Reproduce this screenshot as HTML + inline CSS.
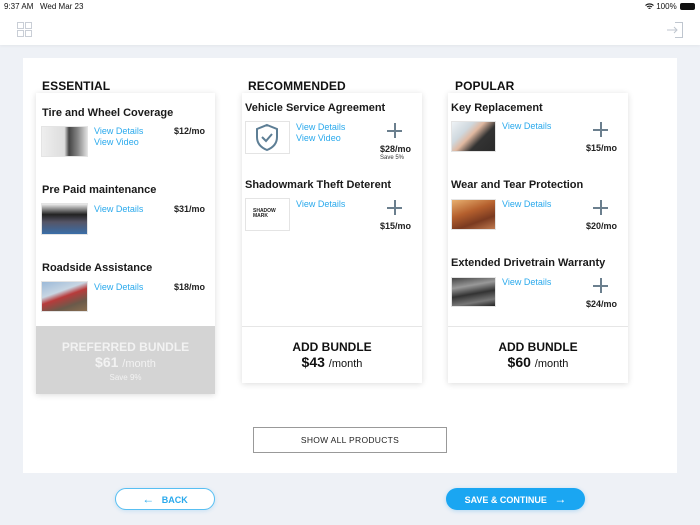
<!DOCTYPE html>
<html><head><meta charset="utf-8">
<style>
*{margin:0;padding:0;box-sizing:border-box}
body{width:700px;height:525px;overflow:hidden;background:#eef1f6;font-family:"Liberation Sans",sans-serif;position:relative;color:#111}
.a{position:absolute;white-space:nowrap}
.hdr{position:absolute;left:0;top:0;width:700px;height:45px;background:#fff;box-shadow:0 1px 3px rgba(0,0,0,.05)}
.panel{position:absolute;left:23px;top:58px;width:654px;height:415px;background:#fff}
.card{position:absolute;background:#fff;box-shadow:0 1px 6px rgba(0,0,0,.14)}
.h{font-size:12px;font-weight:bold;letter-spacing:.1px;color:#111}
.t{font-size:11px;font-weight:bold;color:#1a1a1a}
.l{font-size:9px;color:#2aa9ec;line-height:11px}
.p{font-size:9px;font-weight:bold;color:#222}
.img{position:absolute;border:1px solid #e4e4e4}
.plus{position:absolute;width:15px;height:15px}
.plus:before{content:"";position:absolute;left:0;top:6.5px;width:15px;height:2px;background:#6b7f8e}
.plus:after{content:"";position:absolute;left:6.5px;top:0;width:2px;height:15px;background:#6b7f8e}
.bt{font-size:12px;font-weight:bold}
.bp{font-size:14px;font-weight:bold}
.bp span{font-weight:normal;font-size:11px}
</style></head><body>
<div class="hdr"></div>
<div class="a" style="left:4px;top:2px;font-size:8px;color:#111">9:37 AM&nbsp;&nbsp; Wed Mar 23</div>
<div class="a" style="left:645px;top:2px;font-size:8px;color:#111">
<svg width="9" height="7" viewBox="0 0 9 7" style="vertical-align:-1px"><path d="M0.5 2.5A6 6 0 0 1 8.5 2.5M2 4A4 4 0 0 1 7 4M3.5 5.5A2 2 0 0 1 5.5 5.5" stroke="#111" fill="none" stroke-width="1.1"/></svg> 100%</div>
<div class="a" style="left:680px;top:3px;width:15px;height:7px;background:#111;border-radius:2px"></div>
<svg class="a" style="left:17px;top:22px" width="15" height="15" viewBox="0 0 15 15"><g fill="none" stroke="#c9ced6" stroke-width="1"><rect x="0.5" y="0.5" width="6" height="6"/><rect x="8.5" y="0.5" width="6" height="6"/><rect x="0.5" y="8.5" width="6" height="6"/><rect x="8.5" y="8.5" width="6" height="6"/></g></svg>
<svg class="a" style="left:666px;top:21px" width="18" height="18" viewBox="0 0 18 18"><g fill="none" stroke="#bfc6cf" stroke-width="1"><path d="M9 1.5h7.5v15H9"/><path d="M1 9h10M8 6l3 3-3 3"/></g></svg>

<div class="panel"></div>
<div class="a h" style="left:42px;top:79px">ESSENTIAL</div>
<div class="a h" style="left:248px;top:79px">RECOMMENDED</div>
<div class="a h" style="left:455px;top:79px">POPULAR</div>

<!-- card 1 -->
<div class="card" style="left:36px;top:93px;width:179px;height:301px"></div>
<div class="a t" style="left:42px;top:107px">Tire and Wheel Coverage</div>
<div class="img" style="left:41px;top:126px;width:47px;height:31px;background:linear-gradient(90deg,#eee 0,#ddd 50%,#444 60%,#888 80%,#ddd 100%)"></div>
<div class="a l" style="left:94px;top:126px">View Details<br>View Video</div>
<div class="a p" style="left:174px;top:126px">$12/mo</div>
<div class="a t" style="left:42px;top:184px">Pre Paid maintenance</div>
<div class="img" style="left:41px;top:203px;width:47px;height:32px;background:linear-gradient(180deg,#eee 0,#222 35%,#556 60%,#3a6ea8 100%)"></div>
<div class="a l" style="left:94px;top:204px">View Details</div>
<div class="a p" style="left:174px;top:204px">$31/mo</div>
<div class="a t" style="left:42px;top:262px">Roadside Assistance</div>
<div class="img" style="left:41px;top:281px;width:47px;height:31px;background:linear-gradient(160deg,#9bb9d8 0,#c8d6e3 35%,#b83b3b 50%,#6a5a4a 75%,#8a6e50 100%)"></div>
<div class="a l" style="left:94px;top:282px">View Details</div>
<div class="a p" style="left:174px;top:282px">$18/mo</div>
<div class="a" style="left:36px;top:326px;width:179px;height:68px;background:#d4d4d4"></div>
<div class="a bt" style="left:36px;top:340px;width:179px;text-align:center;color:#f2f2f2">PREFERRED BUNDLE</div>
<div class="a bp" style="left:36px;top:354px;width:179px;text-align:center;color:#f2f2f2">$61 <span>/month</span></div>
<div class="a" style="left:36px;top:373px;width:179px;text-align:center;color:#f2f2f2;font-size:8px">Save 9%</div>

<!-- card 2 -->
<div class="card" style="left:242px;top:93px;width:180px;height:290px"></div>
<div class="a t" style="left:245px;top:102px">Vehicle Service Agreement</div>
<div class="img" style="left:245px;top:121px;width:45px;height:33px;background:#fff"></div>
<svg class="a" style="left:255px;top:123px" width="24" height="29" viewBox="0 0 24 29"><path d="M12 2L22 6v8c0 7-5 11-10 13C7 25 2 21 2 14V6z" fill="none" stroke="#5d7e95" stroke-width="2"/><path d="M7 14l4 4 6-7" fill="none" stroke="#5d7e95" stroke-width="2"/></svg>
<div class="a l" style="left:296px;top:122px">View Details<br>View Video</div>
<div class="plus" style="left:387px;top:123px"></div>
<div class="a p" style="left:380px;top:144px">$28/mo</div>
<div class="a" style="left:380px;top:155px;font-size:6px;color:#333">Save 5%</div>
<div class="a t" style="left:245px;top:179px">Shadowmark Theft Deterent</div>
<div class="img" style="left:245px;top:198px;width:45px;height:33px;background:#fff"></div>
<div class="a" style="left:253px;top:209px;font-size:5px;font-weight:bold;color:#222;line-height:5px">SHADOW<br>MARK</div>
<div class="a l" style="left:296px;top:199px">View Details</div>
<div class="plus" style="left:387px;top:200px"></div>
<div class="a p" style="left:380px;top:221px">$15/mo</div>
<div class="a" style="left:242px;top:326px;width:180px;height:1px;background:#e6e6e6"></div>
<div class="a bt" style="left:242px;top:340px;width:180px;text-align:center">ADD BUNDLE</div>
<div class="a bp" style="left:242px;top:354px;width:180px;text-align:center">$43 <span>/month</span></div>

<!-- card 3 -->
<div class="card" style="left:448px;top:93px;width:180px;height:290px"></div>
<div class="a t" style="left:451px;top:102px">Key Replacement</div>
<div class="img" style="left:451px;top:121px;width:45px;height:31px;background:linear-gradient(135deg,#eef2f5 0,#cfd8de 30%,#e0b8a0 45%,#333 65%,#2a2a2a 100%)"></div>
<div class="a l" style="left:502px;top:121px">View Details</div>
<div class="plus" style="left:593px;top:122px"></div>
<div class="a p" style="left:586px;top:143px">$15/mo</div>
<div class="a t" style="left:451px;top:179px">Wear and Tear Protection</div>
<div class="img" style="left:451px;top:199px;width:45px;height:31px;background:linear-gradient(160deg,#e8b070 0,#b5602e 40%,#7a3a20 70%,#c07a50 100%)"></div>
<div class="a l" style="left:502px;top:199px">View Details</div>
<div class="plus" style="left:593px;top:200px"></div>
<div class="a p" style="left:586px;top:221px">$20/mo</div>
<div class="a t" style="left:451px;top:257px">Extended Drivetrain Warranty</div>
<div class="img" style="left:451px;top:277px;width:45px;height:30px;background:linear-gradient(170deg,#444 0,#999 30%,#333 55%,#777 80%,#222 100%)"></div>
<div class="a l" style="left:502px;top:277px">View Details</div>
<div class="plus" style="left:593px;top:278px"></div>
<div class="a p" style="left:586px;top:299px">$24/mo</div>
<div class="a" style="left:448px;top:326px;width:180px;height:1px;background:#e6e6e6"></div>
<div class="a bt" style="left:448px;top:340px;width:180px;text-align:center">ADD BUNDLE</div>
<div class="a bp" style="left:448px;top:354px;width:180px;text-align:center">$60 <span>/month</span></div>

<div class="a" style="left:253px;top:427px;width:194px;height:26px;border:1px solid #999;text-align:center;line-height:24px;font-size:8.5px;letter-spacing:.3px;color:#222">SHOW ALL PRODUCTS</div>

<div class="a" style="left:115px;top:488px;width:100px;height:22px;border:1px solid #58bff2;border-radius:11px;background:#fff;text-align:center;line-height:20px;font-size:9px;font-weight:bold;color:#2aa9ec;box-shadow:0 1px 4px rgba(40,160,240,.2)"><span style="font-weight:normal;font-size:12px">&#8592;</span>&nbsp;&nbsp; BACK</div>
<div class="a" style="left:446px;top:488px;width:139px;height:22px;border-radius:11px;background:#1aa6f2;text-align:center;line-height:22px;font-size:9px;font-weight:bold;color:#fff;box-shadow:0 1px 4px rgba(40,160,240,.3)">SAVE &amp; CONTINUE&nbsp;&nbsp; <span style="font-weight:normal;font-size:12px">&#8594;</span></div>
</body></html>
